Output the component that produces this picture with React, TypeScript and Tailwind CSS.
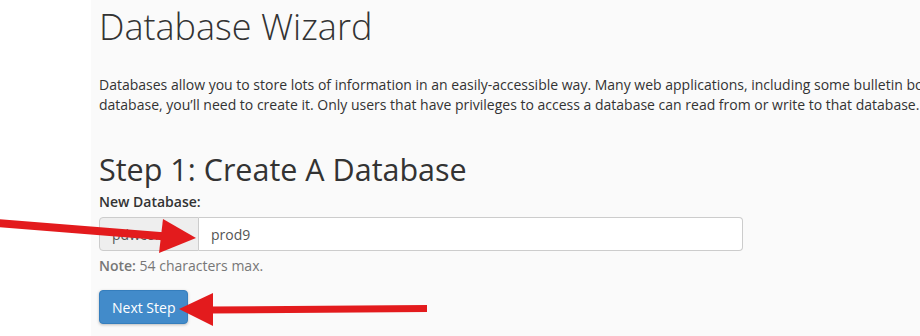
import React from 'react';

const App: React.FC = () => {
  return (
    <div className="relative flex w-[920px] h-[336px] overflow-hidden bg-white text-[#333] font-['Open_Sans',sans-serif]">
      <div className="w-[91px] shrink-0 bg-white"></div>

      <main className="flex-1 min-w-0 bg-[#fafafa] pl-[8px] overflow-hidden">
        <h1 className="mt-[3px] text-[36px] leading-[48px] font-light text-[#333]">Database Wizard</h1>

        <p className="mt-[24px] text-[14px] leading-[20px] whitespace-nowrap">
          Databases allow you to store lots of information in an easily-accessible way. Many web applications, including some bulletin boards, content management systems, and others, require a database. To use a
          <br />
          database, you’ll need to create it. Only users that have privileges to access a database can read from or write to that database.
        </p>

        <h2 className="mt-[36px] text-[30.5px] leading-[36px] font-medium">Step 1: Create A Database</h2>

        <div className="mt-[5px]">
          <label className="block text-[14px] leading-[20px] font-semibold">New Database:</label>
          <div className="mt-[5px] flex w-[644px] h-[34px]">
            <span className="flex items-center w-[100px] px-[12px] text-[14px] text-[#555] bg-[#eee] border border-[#ccc] rounded-l-[4px]">
              pdwcom_
            </span>
            <input
              readOnly
              value="prod9"
              className="flex-1 px-[12px] text-[14px] text-[#555] bg-white border border-l-0 border-[#ccc] rounded-r-[4px] outline-none"
            />
          </div>
          <p className="mt-[5px] text-[14px] leading-[20px] text-[#777]">
            <strong className="font-semibold">Note:</strong> 54 characters max.
          </p>
        </div>

        <button className="mt-[14px] h-[34px] px-[12px] text-[14px] text-white bg-[#428bca] border border-[#357ebd] rounded-[4px] shadow-[0_1px_3px_rgba(0,0,0,0.25)]">
          Next Step
        </button>
      </main>

      {/* annotation arrows */}
      <svg className="absolute inset-0 pointer-events-none" width="920" height="336" viewBox="0 0 920 336">
        <line x1="-4" y1="223" x2="166" y2="236.5" stroke="#e31b1d" strokeWidth="8" />
        <polygon points="163,219 196,238 159,253" fill="#e31b1d" />
        <line x1="210" y1="310" x2="427" y2="308.5" stroke="#e31b1d" strokeWidth="7" />
        <polygon points="179,309 213,293 213,326" fill="#e31b1d" />
      </svg>
    </div>
  );
};

export default App;
